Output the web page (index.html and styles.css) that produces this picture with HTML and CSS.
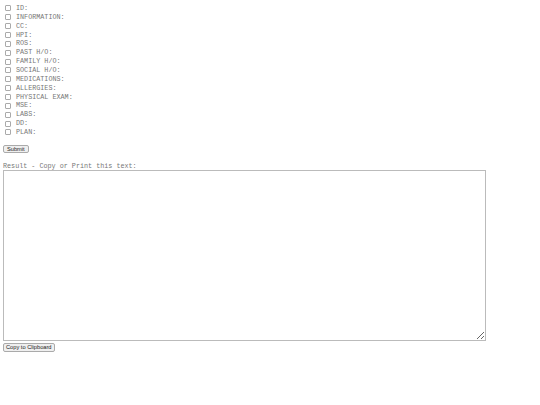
FILE: index.html
```html
<!DOCTYPE html>
<html>
<head>
<meta charset="utf-8">
<link rel="stylesheet" href="styles.css">
</head>
<body>
<form class="form">
  <label class="row"><input type="checkbox" class="cb"><span>ID:</span></label>
  <label class="row"><input type="checkbox" class="cb"><span>INFORMATION:</span></label>
  <label class="row"><input type="checkbox" class="cb"><span>CC:</span></label>
  <label class="row"><input type="checkbox" class="cb"><span>HPI:</span></label>
  <label class="row"><input type="checkbox" class="cb"><span>ROS:</span></label>
  <label class="row"><input type="checkbox" class="cb"><span>PAST H/O:</span></label>
  <label class="row"><input type="checkbox" class="cb"><span>FAMILY H/O:</span></label>
  <label class="row"><input type="checkbox" class="cb"><span>SOCIAL H/O:</span></label>
  <label class="row"><input type="checkbox" class="cb"><span>MEDICATIONS:</span></label>
  <label class="row"><input type="checkbox" class="cb"><span>ALLERGIES:</span></label>
  <label class="row"><input type="checkbox" class="cb"><span>PHYSICAL EXAM:</span></label>
  <label class="row"><input type="checkbox" class="cb"><span>MSE:</span></label>
  <label class="row"><input type="checkbox" class="cb"><span>LABS:</span></label>
  <label class="row"><input type="checkbox" class="cb"><span>DD:</span></label>
  <label class="row"><input type="checkbox" class="cb"><span>PLAN:</span></label>
  <button type="button" class="btn submit">Submit</button>
</form>
<div class="result-label">Result - Copy or Print this text:</div>
<textarea class="result"></textarea>
<button type="button" class="btn copy">Copy to Clipboard</button>
</body>
</html>
```
FILE: styles.css
```css
html, body {
  background: #fff;
}
body {
  margin: 4px 3px;
  font-family: "Liberation Mono", monospace;
  font-size: 6.75px;
  color: #777;
}
.form {
  display: flex;
  flex-direction: column;
  align-items: flex-start;
}
.row {
  display: flex;
  align-items: center;
  height: 8.86px;
  line-height: 8.86px;
}
.cb {
  appearance: none;
  -webkit-appearance: none;
  width: 6px;
  height: 6px;
  margin: 0 5px 0 2px;
  border: 1px solid #aaa;
  border-radius: 1px;
  background: #fff;
  box-sizing: border-box;
}
.btn {
  font-family: "Liberation Sans", Arial, sans-serif;
  font-size: 5.7px;
  color: #222;
  background: #efefef;
  border: 1px solid #aaa;
  border-radius: 2px;
  padding: 0 2px;
  box-sizing: border-box;
}
.submit {
  margin-top: 8px;
  height: 8px;
  line-height: 6px;
  padding: 0 3px;
}
.result-label {
  margin-top: 9px;
  height: 8px;
  line-height: 8px;
}
.result {
  display: block;
  width: 483px;
  height: 171px;
  margin: 0;
  border: 1px solid #bbb;
  box-sizing: border-box;
  resize: both;
  background: #fff;
}
.copy {
  margin-top: 2px;
  height: 9px;
  line-height: 7px;
}
```
